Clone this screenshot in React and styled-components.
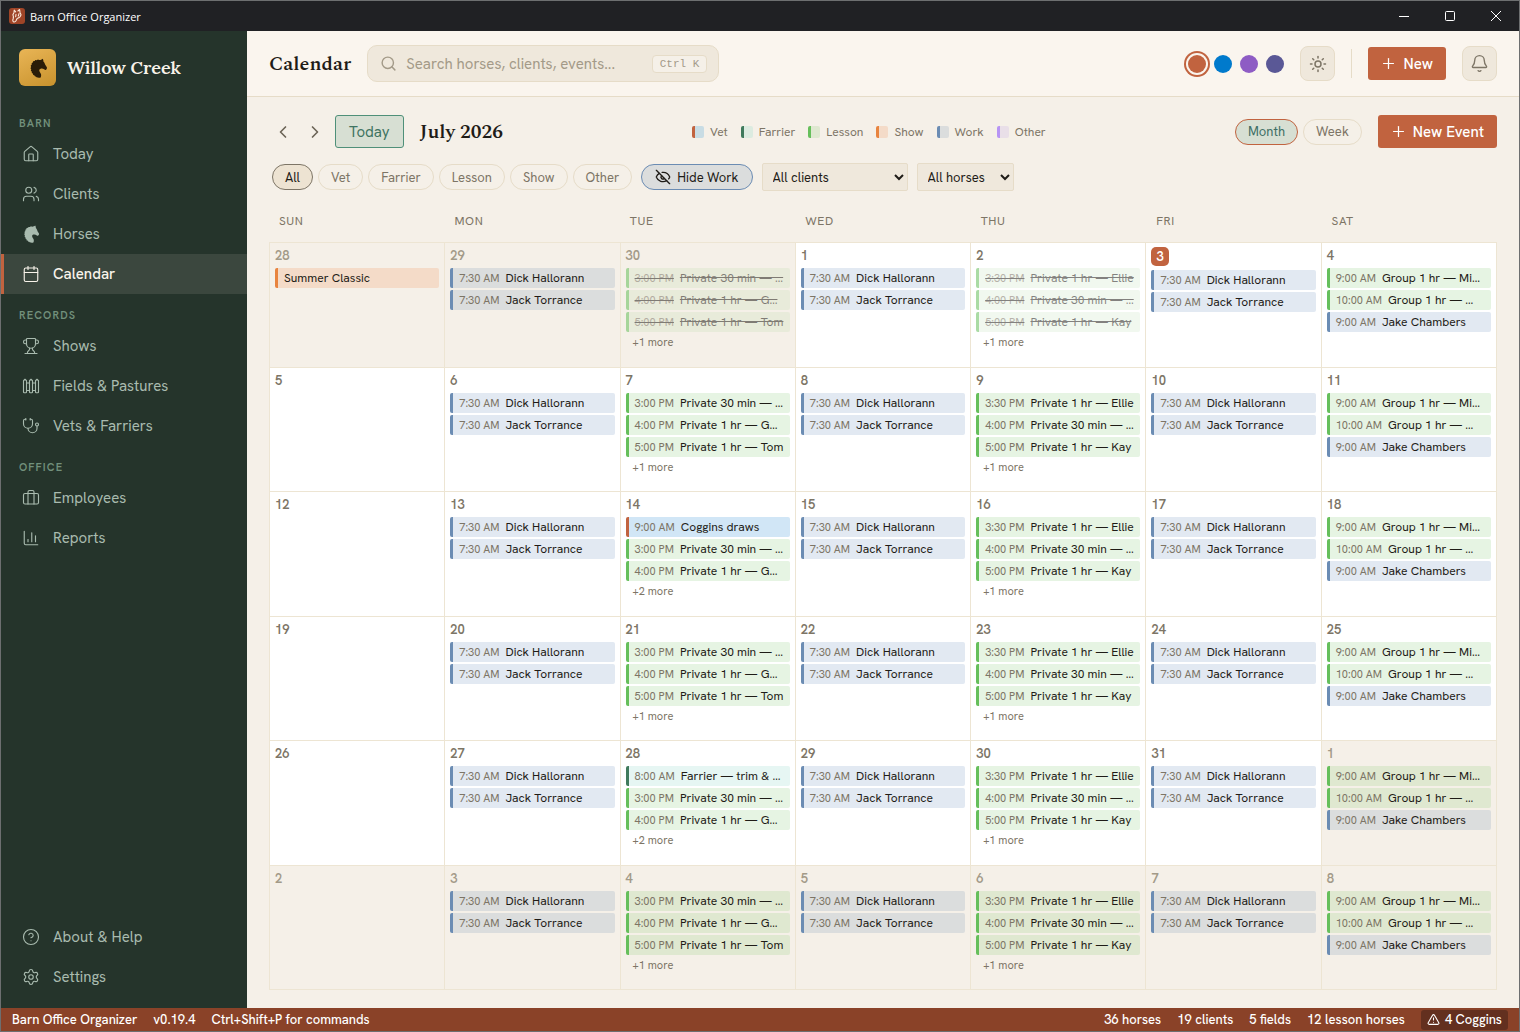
import { useState } from 'react'
import styled, { createGlobalStyle, css } from 'styled-components'
import {
  Bell,
  Briefcase,
  Calendar as CalendarIcon,
  ChartColumn,
  ChevronLeft,
  ChevronRight,
  CircleHelp,
  EyeOff,
  Fence,
  House,
  Plus,
  Search,
  Settings,
  Stethoscope,
  Sun,
  TriangleAlert,
  Trophy,
  Users,
} from 'lucide-react'

const SANS = "'Hanken Grotesk', Inter, 'Liberation Sans', sans-serif"
const SERIF = "Spectral, 'Liberation Serif', serif"

const GlobalStyle = createGlobalStyle`
  *, *::before, *::after { box-sizing: border-box; }
  body {
    margin: 0;
    background: #f5f0e8;
    color: #1f1c17;
    font-family: ${SANS};
    font-size: 13px;
  }
  button, input, select { font: inherit; color: inherit; }
  button { cursor: pointer; }
`

const KINDS = {
  vet: { bar: '#c1633f', tint: '#d1e6f6', muted: '#c8dce4' },
  farrier: { bar: '#3f7a5c', tint: '#e6f6f3', muted: '#dcebe0' },
  lesson: { bar: '#66bf5b', tint: '#e6f4e3', muted: '#dfe8d0' },
  show: { bar: '#e8843f', tint: '#fce6d6', muted: '#f4dbc8' },
  work: { bar: '#6b8cb3', tint: '#e2e9f2', muted: '#dbdddd' },
  other: { bar: '#b794f4', tint: '#f1e9fb', muted: '#e9dfe8' },
}

const legend = [
  ['vet', 'Vet'],
  ['farrier', 'Farrier'],
  ['lesson', 'Lesson'],
  ['show', 'Show'],
  ['work', 'Work'],
  ['other', 'Other'],
]

const filters = ['All', 'Vet', 'Farrier', 'Lesson', 'Show', 'Other']
const accents = ['#c1633f', '#007acc', '#8e5cc4', '#5a5896']
const weekdays = ['Sun', 'Mon', 'Tue', 'Wed', 'Thu', 'Fri', 'Sat']

// what repeats every week, by weekday
const work = [
  ['work', '7:30 AM', 'Dick Hallorann'],
  ['work', '7:30 AM', 'Jack Torrance'],
]
const tuesday = [
  ['lesson', '3:00 PM', 'Private 30 min — …'],
  ['lesson', '4:00 PM', 'Private 1 hr — G…'],
  ['lesson', '5:00 PM', 'Private 1 hr — Tom'],
]
const thursday = [
  ['lesson', '3:30 PM', 'Private 1 hr — Ellie'],
  ['lesson', '4:00 PM', 'Private 30 min — …'],
  ['lesson', '5:00 PM', 'Private 1 hr — Kay'],
]
const saturday = [
  ['lesson', '9:00 AM', 'Group 1 hr — Mi…'],
  ['lesson', '10:00 AM', 'Group 1 hr — …'],
  ['work', '9:00 AM', 'Jake Chambers'],
]
const weekly = [
  { events: [] },
  { events: work },
  { events: tuesday, more: 1 },
  { events: work },
  { events: thursday, more: 1 },
  { events: work },
  { events: saturday },
]

// one-off changes, by position in the grid
const special = {
  0: { events: [['show', '', 'Summer Classic']] },
  2: { done: true },
  4: { done: true },
  16: { events: [['vet', '9:00 AM', 'Coggins draws'], tuesday[0], tuesday[1]], more: 2 },
  30: { events: [['farrier', '8:00 AM', 'Farrier — trim & …'], tuesday[0], tuesday[1]], more: 2 },
}

function buildWeeks() {
  const weeks = []
  for (let w = 0; w < 6; w++) {
    const days = []
    for (let d = 0; d < 7; d++) {
      const i = w * 7 + d
      const date = new Date(2026, 5, 28 + i)
      days.push({
        key: i,
        number: date.getDate(),
        outside: date.getMonth() !== 6,
        today: i === 5,
        ...weekly[d],
        ...special[i],
      })
    }
    weeks.push(days)
  }
  return weeks
}

const weeks = buildWeeks()

/* ---------- window ---------- */

const Window = styled.div`
  display: flex;
  flex-direction: column;
  min-height: 100vh;
  border: 1px solid #6d6f70;
`

const TitleBar = styled.header`
  display: flex;
  align-items: center;
  gap: 5px;
  height: 30px;
  padding-left: 8px;
  background: #202124;
  color: #fff;
  font-family: 'Open Sans', sans-serif;
  font-size: 11px;
`

const WindowButtons = styled.div`
  display: flex;
  margin-left: auto;
`

const WindowButton = styled.button`
  display: grid;
  place-items: center;
  width: 46px;
  height: 30px;
  padding: 0;
  border: 0;
  background: none;
  color: #fff;
`

const Body = styled.div`
  display: flex;
  flex: 1;
`

/* ---------- sidebar ---------- */

const Sidebar = styled.aside`
  display: flex;
  flex-direction: column;
  flex: none;
  width: 246px;
  padding: 18px 0 11px;
  background: #25342b;
`

const Brand = styled.div`
  display: flex;
  align-items: center;
  gap: 11px;
  padding: 0 18px 16px;
  color: #f8f3ea;
  font-family: Lora, 'Liberation Serif', serif;
  font-size: 18px;
  font-weight: 600;
  line-height: 22px;
`

const BrandMark = styled.span`
  display: grid;
  place-items: center;
  width: 37px;
  height: 37px;
  border-radius: 6px;
  background: linear-gradient(155deg, #e9b556, #c8922d);
  color: #2a1c08;
`

const NavHeading = styled.h2`
  margin: 0;
  padding: 13px 18px 3px;
  color: #72907c;
  font-size: 11px;
  font-weight: 600;
  line-height: 16px;
  letter-spacing: 0.1em;
  text-transform: uppercase;
`

const NavLink = styled.a`
  display: flex;
  align-items: center;
  gap: 13px;
  height: 40px;
  padding: 0 18px;
  border-left: 3px solid transparent;
  color: #a9bbaf;
  font-size: 15px;
  text-decoration: none;

  svg {
    flex: none;
  }

  ${(p) =>
    p.$active &&
    css`
      border-left-color: #c1633f;
      background: #3b473e;
      color: #f8f3ea;
      font-weight: 500;
    `}
`

const NavFooter = styled.nav`
  margin-top: auto;
`

/* ---------- top bar ---------- */

const Content = styled.div`
  display: flex;
  flex: 1;
  flex-direction: column;
  min-width: 0;
`

const TopBar = styled.div`
  display: flex;
  align-items: center;
  gap: 16px;
  height: 66px;
  padding: 0 22px;
  border-bottom: 1px solid #e6dcc8;
  background: #faf5ee;
`

const PageTitle = styled.h1`
  margin: 0;
  font-family: ${SERIF};
  font-size: 20px;
  font-weight: 600;
`

const SearchBox = styled.label`
  display: flex;
  align-items: center;
  gap: 9px;
  width: 352px;
  height: 37px;
  padding: 0 11px 0 12px;
  border: 1px solid #e6dcc8;
  border-radius: 10px;
  background: #efe8dc;
  color: #a39a88;

  svg {
    flex: none;
  }
`

const SearchInput = styled.input`
  flex: 1;
  min-width: 0;
  padding: 0;
  border: 0;
  outline: 0;
  background: none;
  font-size: 15px;

  &::placeholder {
    color: #a39a88;
  }
`

const Kbd = styled.kbd`
  padding: 0 7px;
  border: 1px solid #e6dcc8;
  border-radius: 4px;
  background: #f5f0e8;
  color: #a39a88;
  font-family: 'Liberation Mono', monospace;
  font-size: 11px;
  line-height: 16px;
`

const Swatches = styled.div`
  display: flex;
  gap: 8px;
  margin-left: auto;
`

const Swatch = styled.button`
  width: 18px;
  height: 18px;
  padding: 0;
  border: 0;
  border-radius: 50%;
  background: ${(p) => p.$color};
  box-shadow: ${(p) => (p.$active ? `0 0 0 2px #faf5ee, 0 0 0 4px ${p.$color}` : 'none')};
`

const IconButton = styled.button`
  display: grid;
  place-items: center;
  width: 35px;
  height: 35px;
  padding: 0;
  border: 1px solid #e6dcc8;
  border-radius: 8px;
  background: #efe8dc;
  color: #7d7566;
`

const Divider = styled.span`
  width: 1px;
  height: 29px;
  background: #e6dcc8;
`

const PrimaryButton = styled.button`
  display: flex;
  align-items: center;
  gap: 6px;
  height: 33px;
  padding: 0 13px 0 12px;
  border: 0;
  border-radius: 3px;
  background: #c1633f;
  color: #fff;
  font-size: 15px;
  font-weight: 500;
`

/* ---------- calendar toolbar ---------- */

const Main = styled.main`
  display: flex;
  flex: 1;
  flex-direction: column;
  padding: 18px 22px;
`

const Toolbar = styled.div`
  display: flex;
  align-items: center;
  gap: 16px;
  height: 33px;
`

const MonthNav = styled.div`
  display: flex;
  align-items: center;
  gap: 4px;
`

const ArrowButton = styled.button`
  display: grid;
  place-items: center;
  width: 28px;
  height: 28px;
  padding: 0;
  border: 0;
  background: none;
  color: #6b6456;
`

const TodayButton = styled.button`
  height: 33px;
  margin-left: 2px;
  padding: 0 13px;
  border: 1px solid #4f9079;
  border-radius: 3px;
  background: #d7dfd3;
  color: #3f7462;
  font-size: 15px;
`

const MonthTitle = styled.h2`
  margin: 0;
  font-family: ${SERIF};
  font-size: 20px;
  font-weight: 600;
`

const Legend = styled.ul`
  display: flex;
  flex: 1;
  justify-content: center;
  gap: 13px;
  margin: 0;
  padding: 0;
  list-style: none;
  color: #7d7566;
  font-size: 12px;
`

const LegendItem = styled.li`
  display: flex;
  align-items: center;
  gap: 6px;

  &::before {
    content: '';
    width: 12px;
    height: 12px;
    border-left: 3px solid ${(p) => KINDS[p.$kind].bar};
    border-radius: 2px;
    background: ${(p) => KINDS[p.$kind].muted};
  }
`

const PillGroup = styled.div`
  display: flex;
  gap: 5px;
`

const Pill = styled.button`
  display: flex;
  align-items: center;
  gap: 6px;
  height: 26px;
  padding: 0 12px;
  border: 1px solid #e6dcc8;
  border-radius: 13px;
  background: transparent;
  color: #7d7566;
  font-size: 13px;

  ${(p) =>
    p.$tone === 'selected' &&
    css`
      border-color: #7d7566;
      background: #ede3d2;
      color: #1f1c17;
    `}
  ${(p) =>
    p.$tone === 'view' &&
    css`
      border-color: #c1633f;
      background: #d7dfd3;
      color: #3f6f66;
    `}
  ${(p) =>
    p.$tone === 'work' &&
    css`
      padding: 0 13px;
      border-color: #6b8cb3;
      background: #dbdddd;
      color: #1f1c17;
    `}
`

const FilterBar = styled.div`
  display: flex;
  align-items: center;
  gap: 9px;
  height: 28px;
  margin: 15px 0 14px;
  padding-left: 3px;
`

const Select = styled.select`
  width: ${(p) => p.$width}px;
  height: 28px;
  padding: 0 6px;
  border: 1px solid #e6dcc8;
  border-radius: 2px;
  background: #efe8dc;
  font-size: 13px;
`

/* ---------- month grid ---------- */

const MonthTable = styled.table`
  display: flex;
  flex: 1;
  flex-direction: column;
`

const WeekdayRow = styled.tr`
  display: grid;
  grid-template-columns: repeat(7, 1fr);
`

const Weekday = styled.th`
  padding: 8px 10px 13px;
  color: #7d7566;
  font-size: 12px;
  font-weight: 400;
  line-height: 16px;
  letter-spacing: 0.05em;
  text-align: left;
  text-transform: uppercase;
`

const Weeks = styled.tbody`
  display: grid;
  flex: 1;
  grid-auto-rows: 1fr;
  border: 1px solid #ede5d3;
  border-width: 1px 0 0 1px;
`

const Week = styled.tr`
  display: grid;
  grid-template-columns: repeat(7, minmax(0, 1fr));
`

const Day = styled.td`
  padding: 4px 5px;
  border: 1px solid #ede5d3;
  border-width: 0 1px 1px 0;
  background: ${(p) => (p.$outside ? '#f5f0e8' : '#fff')};
`

const DayNumber = styled.span`
  display: block;
  width: fit-content;
  margin-bottom: 4px;
  color: ${(p) => (p.$outside ? '#a39a88' : '#7d7566')};
  font-size: 13px;
  font-weight: 600;
  line-height: 17px;

  ${(p) =>
    p.$today &&
    css`
      padding: 0 5px;
      border-radius: 5px;
      background: #c1633f;
      color: #fff;
      line-height: 19px;
    `}
`

const EventChip = styled.button`
  display: block;
  width: 100%;
  height: 20px;
  margin-bottom: 2px;
  padding: 0 6px;
  overflow: hidden;
  border: 0;
  border-left: 3px solid ${(p) => KINDS[p.$kind].bar};
  border-radius: 2px;
  background: ${(p) => (p.$outside ? KINDS[p.$kind].muted : KINDS[p.$kind].tint)};
  font-size: 12px;
  line-height: 20px;
  text-align: left;
  text-overflow: ellipsis;
  white-space: nowrap;
  opacity: ${(p) => (p.$done ? 0.55 : 1)};
  text-decoration: ${(p) => (p.$done ? 'line-through' : 'none')};
`

const EventTime = styled.time`
  margin-right: 6px;
  color: #7d7566;
  font-size: 11px;
`

const MoreButton = styled.button`
  display: block;
  padding: 0 7px;
  border: 0;
  background: none;
  color: #7d7566;
  font-size: 11px;
  line-height: 16px;
`

/* ---------- status bar ---------- */

const StatusBar = styled.footer`
  display: flex;
  align-items: center;
  gap: 16px;
  height: 23px;
  padding: 0 11px;
  background: #8a4228;
  color: #fff;
  font-size: 13px;
  font-weight: 500;
`

const StatusSide = styled.div`
  display: flex;
  align-items: center;
  gap: 16px;

  & + & {
    margin-left: auto;
  }
`

const StatusAlert = styled.button`
  display: flex;
  align-items: center;
  gap: 5px;
  height: 20px;
  padding: 0 6px;
  border: 0;
  border-radius: 3px;
  background: #63301f;
`

/* ---------- drawings ---------- */

function HorseHead({ size = 18 }) {
  return (
    <svg width={size} height={size} viewBox="0 0 24 24" fill="currentColor" aria-hidden="true">
      <path d="M17.6.8c.7 1 1 2.100.9 3.300 1.200 1.200 1.700 2.500 2.200 4.100l1.900 3c.4.700.2 1.300-.2 1.900l-.7.9c-.6.500-1.300.4-1.900-.1-1.300-.9-2.800-1.400-4.500-1.100-1.400.3-2 1.400-1.700 2.700.4 1.500 1.700 2.400 2.100 4.200.2 1.300.1 2.600-.5 3.600-1.600.5-3.300.4-5-.2l-.7-.9-1 .1-1-1.600-1.200-.2-.5-1.800-1.200-.6-.1-1.800-1.100-1 .5-1.700-1-1.300.9-1.500-.6-1.600 1.300-1.300-.1-1.700L5.700 5.500l.4-1.500 1.900-.3.800-1.200 1.900.2 1.100-.9 1.800.5c1.600-.1 3-.5 4-1.500z" />
    </svg>
  )
}

function AppIcon() {
  return (
    <svg width="16" height="16" viewBox="0 0 16 16" fill="none" aria-hidden="true">
      <rect width="16" height="16" rx="3" fill="#9f4427" />
      <path
        d="M5.200 2.200 5 4.400 3.900 6.800c.7 1.300.7 2.600.2 4.200-.5 1.200-.4 2.500.6 2.900 1 .3 1.800-.2 2.300-1.100l1.100-2.300c1.800-.6 3.700-1.900 3.900-3.800L11 4.400l-.4-2.900L8.900 3M5.200 2.200l1.500 1.600M7 6.300l-.3 2.500M10 5.600 9.300 8"
        stroke="#fbe9dc"
        strokeWidth="1.100"
        strokeLinecap="round"
        strokeLinejoin="round"
      />
    </svg>
  )
}

const iconProps = { size: 18, strokeWidth: 1.5 }

const nav = [
  {
    heading: 'Barn',
    links: [
      ['Today', <House {...iconProps} />],
      ['Clients', <Users {...iconProps} />],
      ['Horses', <HorseHead />],
      ['Calendar', <CalendarIcon {...iconProps} />],
    ],
  },
  {
    heading: 'Records',
    links: [
      ['Shows', <Trophy {...iconProps} />],
      ['Fields & Pastures', <Fence {...iconProps} />],
      ['Vets & Farriers', <Stethoscope {...iconProps} />],
    ],
  },
  {
    heading: 'Office',
    links: [
      ['Employees', <Briefcase {...iconProps} />],
      ['Reports', <ChartColumn {...iconProps} />],
    ],
  },
]

function DayCell({ day }) {
  return (
    <Day $outside={day.outside}>
      <DayNumber $outside={day.outside} $today={day.today}>
        {day.number}
      </DayNumber>
      {day.events.map(([kind, time, title]) => (
        <EventChip key={time + title} $kind={kind} $outside={day.outside} $done={day.done}>
          {time && <EventTime>{time}</EventTime>}
          {title}
        </EventChip>
      ))}
      {day.more && <MoreButton>+{day.more} more</MoreButton>}
    </Day>
  )
}

export default function App() {
  const [filter, setFilter] = useState('All')
  const [accent, setAccent] = useState(accents[0])

  return (
    <Window>
      <GlobalStyle />
      <TitleBar>
        <AppIcon />
        Barn Office Organizer
        <WindowButtons>
          <WindowButton aria-label="Minimize">
            <svg width="10" height="10" stroke="currentColor">
              <path d="M0 5.500h10" />
            </svg>
          </WindowButton>
          <WindowButton aria-label="Maximize">
            <svg width="10" height="10" fill="none" stroke="currentColor">
              <rect x=".5" y=".5" width="9" height="9" rx="1" />
            </svg>
          </WindowButton>
          <WindowButton aria-label="Close">
            <svg width="10" height="10" stroke="currentColor">
              <path d="M0 0l10 10M10 0L0 10" />
            </svg>
          </WindowButton>
        </WindowButtons>
      </TitleBar>

      <Body>
        <Sidebar>
          <Brand>
            <BrandMark>
              <HorseHead size={20} />
            </BrandMark>
            Willow Creek
          </Brand>
          <nav>
            {nav.map((group) => (
              <div key={group.heading}>
                <NavHeading>{group.heading}</NavHeading>
                {group.links.map(([label, icon]) => (
                  <NavLink key={label} href="#" $active={label === 'Calendar'}>
                    {icon}
                    {label}
                  </NavLink>
                ))}
              </div>
            ))}
          </nav>
          <NavFooter>
            <NavLink href="#">
              <CircleHelp {...iconProps} />
              About &amp; Help
            </NavLink>
            <NavLink href="#">
              <Settings {...iconProps} />
              Settings
            </NavLink>
          </NavFooter>
        </Sidebar>

        <Content>
          <TopBar>
            <PageTitle>Calendar</PageTitle>
            <SearchBox>
              <Search size={17} strokeWidth={2} />
              <SearchInput placeholder="Search horses, clients, events..." aria-label="Search" />
              <Kbd>Ctrl K</Kbd>
            </SearchBox>
            <Swatches>
              {accents.map((color) => (
                <Swatch
                  key={color}
                  aria-label={color}
                  $color={color}
                  $active={color === accent}
                  onClick={() => setAccent(color)}
                />
              ))}
            </Swatches>
            <IconButton aria-label="Theme">
              <Sun size={18} strokeWidth={2} />
            </IconButton>
            <Divider />
            <PrimaryButton>
              <Plus size={17} strokeWidth={1.75} />
              New
            </PrimaryButton>
            <IconButton aria-label="Notifications">
              <Bell size={19} strokeWidth={1.75} />
            </IconButton>
          </TopBar>

          <Main>
            <Toolbar>
              <MonthNav>
                <ArrowButton aria-label="Previous month">
                  <ChevronLeft size={20} />
                </ArrowButton>
                <ArrowButton aria-label="Next month">
                  <ChevronRight size={20} />
                </ArrowButton>
                <TodayButton>Today</TodayButton>
              </MonthNav>
              <MonthTitle>July 2026</MonthTitle>
              <Legend>
                {legend.map(([kind, label]) => (
                  <LegendItem key={kind} $kind={kind}>
                    {label}
                  </LegendItem>
                ))}
              </Legend>
              <PillGroup>
                <Pill $tone="view">Month</Pill>
                <Pill>Week</Pill>
              </PillGroup>
              <PrimaryButton>
                <Plus size={17} strokeWidth={1.75} />
                New Event
              </PrimaryButton>
            </Toolbar>

            <FilterBar>
              <PillGroup>
                {filters.map((name) => (
                  <Pill
                    key={name}
                    $tone={name === filter ? 'selected' : undefined}
                    onClick={() => setFilter(name)}
                  >
                    {name}
                  </Pill>
                ))}
              </PillGroup>
              <Pill $tone="work">
                <EyeOff size={16} strokeWidth={2} />
                Hide Work
              </Pill>
              <Select $width={146} aria-label="Client">
                <option>All clients</option>
              </Select>
              <Select $width={97} aria-label="Horse">
                <option>All horses</option>
              </Select>
            </FilterBar>

            <MonthTable>
              <thead>
                <WeekdayRow>
                  {weekdays.map((name) => (
                    <Weekday key={name}>{name}</Weekday>
                  ))}
                </WeekdayRow>
              </thead>
              <Weeks>
                {weeks.map((days) => (
                  <Week key={days[0].key}>
                    {days.map((day) => (
                      <DayCell key={day.key} day={day} />
                    ))}
                  </Week>
                ))}
              </Weeks>
            </MonthTable>
          </Main>
        </Content>
      </Body>

      <StatusBar>
        <StatusSide>
          <span>Barn Office Organizer</span>
          <span>v0.19.4</span>
          <span>Ctrl+Shift+P for commands</span>
        </StatusSide>
        <StatusSide>
          <span>36 horses</span>
          <span>19 clients</span>
          <span>5 fields</span>
          <span>12 lesson horses</span>
          <StatusAlert>
            <TriangleAlert size={13} />4 Coggins
          </StatusAlert>
        </StatusSide>
      </StatusBar>
    </Window>
  )
}
